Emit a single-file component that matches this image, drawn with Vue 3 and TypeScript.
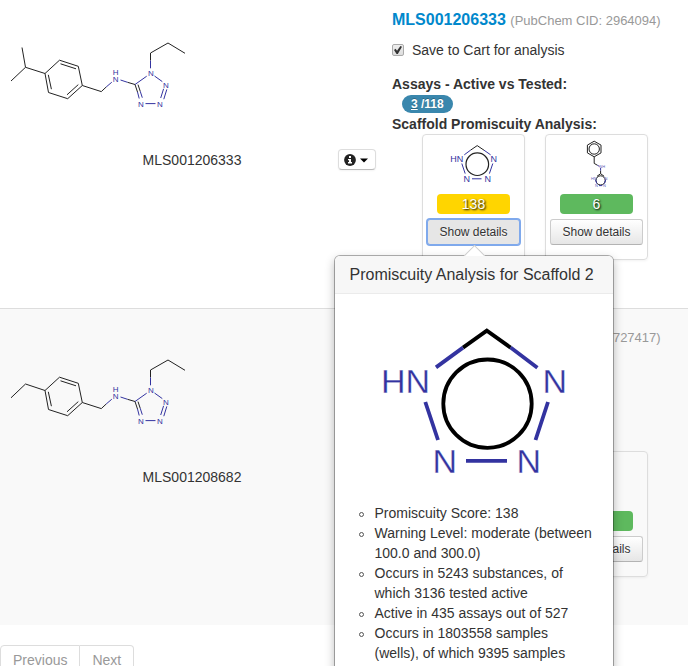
<script setup lang="ts">
import { ref } from 'vue'

interface Scaffold {
  kind: 'tetrazole' | 'benzyl'
  score: number
  level: 'moderate' | 'none'
}

interface Compound {
  id: string
  cid: number
  active: number
  tested: number
  substituent: 'isopropyl' | 'ethyl'
  scaffolds: Scaffold[]
}

const compounds: Compound[] = [
  {
    id: 'MLS001206333',
    cid: 2964094,
    active: 3,
    tested: 118,
    substituent: 'isopropyl',
    scaffolds: [
      { kind: 'tetrazole', score: 138, level: 'moderate' },
      { kind: 'benzyl', score: 6, level: 'none' },
    ],
  },
  {
    id: 'MLS001208682',
    cid: 2727417,
    active: 3,
    tested: 118,
    substituent: 'ethyl',
    scaffolds: [
      { kind: 'tetrazole', score: 138, level: 'moderate' },
      { kind: 'benzyl', score: 6, level: 'none' },
    ],
  },
]

const details: string[] = [
  'Promiscuity Score: 138',
  'Warning Level: moderate (between 100.0 and 300.0)',
  'Occurs in 5243 substances, of which 3136 tested active',
  'Active in 435 assays out of 527',
  'Occurs in 1803558 samples (wells), of which 9395 samples',
]

const saved = ref<Record<string, boolean>>({ MLS001206333: true, MLS001208682: true })
const open = ref<string | null>('MLS001206333-0')

function toggle(key: string): void {
  open.value = open.value === key ? null : key
}
</script>

<template>
  <main class="page">
    <section v-for="c in compounds" :key="c.id" class="row">
      <div class="structure">
        <svg class="molecule" viewBox="0 10 200 139" width="200" height="139" role="img" :aria-label="c.id">
          <g class="bond">
            <path v-if="c.substituent === 'isopropyl'" d="M22 47.5L25.5 67.3L11 81M25.5 67.3L45 73.5" />
            <path v-else d="M11 80.8L25.5 67L45 73.5" />
            <path d="M45 73.5L59.5 60.2L78.3 66.3L82.3 85.5L67.7 98.7L48.5 92.5Z" />
            <path d="M60.5 63.8L76 68.8M48.3 74.8L51.4 89.2M78.3 84.6L67 94.8" />
            <path d="M82.3 85.5L101.3 91.6L106.2 87" />
            <path d="M127.5 82.3L135 84.5L137.5 92M138 84.6L140.2 91.2" />
            <path d="M150.5 60.5V53L168 43L185 53.3" />
          </g>
          <g class="bond blue">
            <path d="M106.2 87L111.8 82.2M120.5 80L127.5 82.3" />
            <path d="M137.5 92L139.2 98.5M140.2 91.2L142.3 97.7" />
            <path d="M135 84.5L146.7 76.2M150.5 60.5V68.3M154.5 76L162.3 81.6" />
            <path d="M166.8 89.4L163.8 99.2M163.6 88.8L160.7 98M145.5 103.6H155.5" />
          </g>
          <g class="atoms">
            <text x="115.7" y="74.5">H</text>
            <text x="115.7" y="82.3">N</text>
            <text x="150.8" y="75.8">N</text>
            <text x="166" y="88">N</text>
            <text x="160" y="107">N</text>
            <text x="141" y="107">N</text>
          </g>
        </svg>
        <div class="caption">
          <span class="name">{{ c.id }}</span>
          <button type="button" class="info" aria-label="Compound information">
            <svg viewBox="0 0 26 12" width="26" height="12" aria-hidden="true">
              <circle cx="6" cy="6" r="5.9" fill="#222" />
              <path d="M5 2h2v2H5zM4 5h3v3h1v1.5H4V8h1V6.3H4z" fill="#fff" />
              <path d="M16 4.5h8l-4 4z" fill="#000" />
            </svg>
          </button>
        </div>
      </div>

      <div class="facts">
        <h4 class="title">
          <a href="#">{{ c.id }}</a> <small>(PubChem CID: {{ c.cid }})</small>
        </h4>
        <label class="save">
          <input v-model="saved[c.id]" type="checkbox" />
          <span>Save to Cart for analysis</span>
        </label>
        <h5 class="heading">Assays - Active vs Tested:</h5>
        <div class="badge-line">
          <a href="#" class="badge"><u>{{ c.active }}</u> /{{ c.tested }}</a>
        </div>
        <h5 class="heading">Scaffold Promiscuity Analysis:</h5>
        <div class="cards">
          <div v-for="(s, i) in c.scaffolds" :key="i" class="card">
            <svg v-if="s.kind === 'tetrazole'" class="thumb" viewBox="427 139 93 50" width="93" height="50" aria-hidden="true">
              <g class="bond">
                <path d="M470.5 150.2L477.2 145.6L484 150.2" />
                <circle class="ring" cx="477.3" cy="164.2" r="11.3" />
              </g>
              <path class="bond blue" d="M470.5 150.2L464.3 154.8M484 150.2L490.6 154.8M461.8 163.5L465.2 173.6M492.8 163.5L489.4 173.6M472 178.8H481.5" />
              <g class="atoms left">
                <text x="450.3" y="162.3">HN</text>
                <text x="490.6" y="162.3">N</text>
                <text x="463.6" y="182">N</text>
                <text x="484.4" y="182">N</text>
              </g>
            </svg>
            <svg v-else class="thumb" viewBox="550 139 93 50" width="93" height="50" aria-hidden="true">
              <g class="bond">
                <path d="M594.2 141.2L601 145.1V152.9L594.2 156.8L587.4 152.9V145.1Z" />
                <circle cx="594.2" cy="149" r="5.2" />
                <path d="M594.2 156.8V163.4L597.5 165.3" />
                <path d="M600.6 170.5V173.7M597 176.3L600.6 173.7L604.2 176.3" />
                <circle cx="600.6" cy="180.4" r="4.6" />
              </g>
              <path class="bond blue" d="M597.5 165.3L599.4 166.4M600.6 167.8V170.5M595.5 179.7L596.8 183.5M605.7 179.7L604.5 183.5M599 185.6H602.2" />
              <g class="tiny">
                <text x="599.3" y="168">NH</text>
                <text x="591" y="180">HN</text>
                <text x="604.6" y="180">N</text>
                <text x="595" y="187">N</text>
                <text x="603" y="187">N</text>
              </g>
            </svg>
            <div class="score" :class="s.level">{{ s.score }}</div>
            <div class="anchor">
              <button
                type="button"
                class="show"
                :class="{ active: open === `${c.id}-${i}` }"
                :aria-expanded="open === `${c.id}-${i}`"
                @click="toggle(`${c.id}-${i}`)"
              >
                Show details
              </button>
              <div v-if="open === `${c.id}-${i}`" class="popover" role="dialog" aria-label="Promiscuity Analysis">
                <h3 class="popover-title">Promiscuity Analysis for Scaffold 2</h3>
                <div class="popover-content">
                  <svg class="scaffold" viewBox="374 303 226 200" aria-hidden="true">
                    <path class="big" d="M463 347.6L486.8 330.6L510.6 347.6" />
                    <circle class="big" cx="487.5" cy="403.7" r="44.2" />
                    <path class="big blue" d="M463 347.6L436 367.4M510.6 347.6L537.4 367.8M425.3 402L438 440M548 402L535.5 440M466 460.8H507" />
                    <g class="big-atoms">
                      <text x="381" y="393">HN</text>
                      <text x="542.6" y="393">N</text>
                      <text x="432.6" y="473">N</text>
                      <text x="516.6" y="473">N</text>
                    </g>
                  </svg>
                  <ul class="details">
                    <li v-for="d in details" :key="d">{{ d }}</li>
                  </ul>
                </div>
              </div>
            </div>
          </div>
        </div>
      </div>
    </section>

    <nav class="pager" aria-label="Pages">
      <a href="#">Previous</a>
      <a href="#">Next</a>
    </nav>
  </main>
</template>

<style>
body {
  margin: 0;
  background: #fff;
  overflow-x: hidden;
}
html {
  scrollbar-width: none;
}
</style>

<style scoped>
.page {
  font: 14px/20px "Liberation Sans", Arial, sans-serif;
  color: #333;
}
.row {
  display: grid;
  grid-template-columns: 24fr 19fr;
  padding: 18px 0 48px;
  border-top: 1px solid #ddd;
}
.row:first-child {
  padding-top: 10px;
  border-top: 0;
}
.row:nth-child(even) {
  background: #f9f9f9;
}
.structure,
.facts {
  min-width: 0;
}
.molecule {
  display: block;
}
.caption {
  display: grid;
  grid-template-columns: 1fr auto 1fr;
  align-items: center;
  padding: 0 8px;
  height: 20px;
}
.name {
  grid-column: 2;
}
.info {
  justify-self: end;
  display: flex;
  align-items: center;
  justify-content: center;
  width: 38px;
  height: 21px;
  padding: 0;
  background: #fff;
  border: 1px solid #ddd;
  border-bottom-color: #bbb;
  border-radius: 4px;
  box-shadow: 0 1px 2px rgba(0, 0, 0, 0.05);
}
.facts {
  padding: 0 8px;
}
.title {
  margin: 0 0 9px;
  font-size: 16px;
  line-height: 20px;
  white-space: nowrap;
}
.title a {
  color: #08c;
  text-decoration: none;
}
.title small {
  font-size: 13px;
  font-weight: normal;
  color: #999;
}
.save {
  display: flex;
  align-items: center;
  gap: 8px;
  margin-bottom: 14px;
}
.save input {
  appearance: none;
  display: grid;
  place-items: center;
  width: 12px;
  height: 12px;
  margin: 0;
  border: 1px solid #aaa;
  border-radius: 2px;
  background: linear-gradient(#eee, #ddd);
}
.save input:checked::after {
  content: "";
  width: 8px;
  height: 8px;
  background: #333;
  clip-path: polygon(0 50%, 20% 35%, 38% 60%, 80% 0, 100% 10%, 48% 100%, 32% 100%);
}
.heading {
  margin: 0;
  font-size: 14px;
  line-height: 20px;
}
.badge-line {
  display: flex;
  align-items: center;
  height: 20px;
  padding: 0 10px;
}
.badge {
  padding: 2px 9px;
  border-radius: 9px;
  background: #3a87ad;
  color: #fff;
  font-size: 12px;
  font-weight: bold;
  line-height: 14px;
  text-decoration: none;
  text-shadow: 0 -1px 0 rgba(0, 0, 0, 0.25);
}
.cards {
  display: flex;
  gap: 20px;
  padding-left: 30px;
}
.card {
  flex: none;
  padding: 4px 4px 14px;
  border: 1px solid #ddd;
  border-radius: 4px;
  box-shadow: 0 1px 3px rgba(0, 0, 0, 0.055);
}
.thumb {
  display: block;
}
.score {
  margin: 5px 10px;
  border-radius: 4px;
  color: #fff;
  text-align: center;
  text-shadow: 1px 1px 2px #000;
}
.score.moderate {
  background: #ffd500;
}
.score.none {
  background: #5eb95e;
}
.anchor {
  position: relative;
}
.show {
  display: block;
  width: 100%;
  height: 26px;
  padding: 0;
  border: 1px solid #ccc;
  border-bottom-color: #b3b3b3;
  border-radius: 3px;
  background: linear-gradient(#fff, #e6e6e6);
  color: #333;
  font: 12px/20px "Liberation Sans", Arial, sans-serif;
  text-shadow: 0 1px 1px rgba(255, 255, 255, 0.75);
}
.show.active {
  background: #e6e6e6;
  border-color: #7fa9ec;
  box-shadow: 0 0 0 1px #7fa9ec;
}
.popover {
  position: absolute;
  z-index: 10;
  top: 36px;
  left: 50%;
  width: 278px;
  margin-left: -140px;
  border: 1px solid rgba(0, 0, 0, 0.3);
  border-radius: 6px;
  background: #fff;
  background-clip: padding-box;
  box-shadow: 0 4px 10px rgba(0, 0, 0, 0.25);
}
.popover::before {
  content: "";
  position: absolute;
  top: -8px;
  left: 132px;
  width: 14px;
  height: 14px;
  border: 1px solid #ccc;
  border-width: 1px 0 0 1px;
  background: #fff;
  transform: rotate(45deg);
  z-index: -1;
}
.popover-title {
  margin: 0;
  padding: 9px 15px 8px;
  border-bottom: 1px solid #ebebeb;
  border-radius: 5px 5px 0 0;
  background: #f7f7f7;
  font-size: 16px;
  font-weight: normal;
  line-height: 20px;
  white-space: nowrap;
}
.popover-content {
  padding: 9px 14px 24px;
}
.scaffold {
  display: block;
  width: 226px;
  margin-left: 25px;
}
.details {
  margin: 0;
  padding: 0 6px 0 26px;
  list-style: none;
}
.details li {
  position: relative;
}
.details li::before {
  content: "";
  position: absolute;
  top: 9px;
  left: -16px;
  width: 3px;
  height: 3px;
  border: 1px solid #555;
  border-radius: 50%;
}
.pager {
  display: flex;
  margin: 20px 0;
}
.pager a {
  padding: 4px 12px;
  border: 1px solid #ddd;
  border-left-width: 0;
  color: #999;
  text-decoration: none;
}
.pager a:first-child {
  border-left-width: 1px;
  border-radius: 4px 0 0 4px;
}
.pager a:last-child {
  border-radius: 0 4px 4px 0;
}
.bond {
  fill: none;
  stroke: #222;
  stroke-width: 1;
}
.bond.blue {
  stroke: #3333a0;
}
.ring {
  stroke-width: 1.2;
}
.atoms {
  fill: #3333a0;
  font-size: 8px;
  text-anchor: middle;
}
.atoms.left {
  font-size: 9px;
  text-anchor: start;
}
.tiny {
  fill: #6060b8;
  font-size: 4px;
}
.big {
  fill: none;
  stroke: #000;
  stroke-width: 3.8;
}
.big.blue {
  stroke: #3333a0;
}
.big-atoms {
  fill: #3333a0;
  stroke: #fff;
  stroke-width: 0.3;
  font-size: 34px;
}
</style>
